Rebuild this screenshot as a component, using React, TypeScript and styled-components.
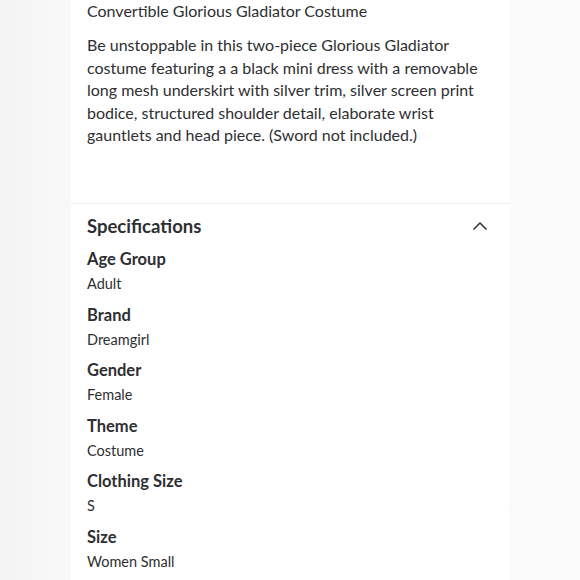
import React from 'react';
import styled, { createGlobalStyle } from 'styled-components';

const GlobalStyle = createGlobalStyle`
  html, body {
    margin: 0;
    padding: 0;
    background: linear-gradient(90deg, #f3f3f3 0%, #f8f8f8 10%, #fbfbfb 100%);
    font-family: Lato, "Open Sans", Arial, sans-serif;
    color: #2e2f32;
  }
`;

const Page = styled.div`
  width: 580px;
  height: 580px;
  overflow: hidden;
  display: flex;
`;

const Column = styled.div`
  margin-left: 71px;
  width: 438px;
  display: flex;
  flex-direction: column;
  flex-shrink: 0;

  & > * {
    flex-shrink: 0;
  }
`;

const Card = styled.section`
  background: #ffffff;
  padding: 0 16px;
`;

const DescriptionCard = styled(Card)`
  height: 203px;
  box-sizing: border-box;
`;

const Title = styled.div`
  font-size: 16px;
  line-height: 22px;
  margin: 0;
`;

const Description = styled.p`
  font-size: 16px;
  line-height: 22.5px;
  margin: 12px 0 0 0;
`;

const Divider = styled.div`
  height: 1px;
  background: #ececec;
`;

const SpecHeader = styled.div`
  display: flex;
  align-items: center;
  justify-content: space-between;
  height: 44px;
`;

const SpecTitle = styled.h2`
  font-size: 18.5px;
  font-weight: 700;
  margin: 0;
`;

const Chevron = styled.svg`
  width: 18px;
  height: 18px;
  margin-right: 4px;
`;

const SpecList = styled.dl`
  margin: 0;
  display: flex;
  flex-direction: column;
`;

const SpecItem = styled.div`
  height: 55.5px;
  display: flex;
  flex-direction: column;
  flex-shrink: 0;
`;

const SpecLabel = styled.dt`
  font-size: 16.5px;
  font-weight: 700;
  line-height: 22px;
`;

const SpecValue = styled.dd`
  font-size: 14.5px;
  line-height: 20px;
  margin: 4px 0 0 0;
`;

const specs = [
  { label: 'Age Group', value: 'Adult' },
  { label: 'Brand', value: 'Dreamgirl' },
  { label: 'Gender', value: 'Female' },
  { label: 'Theme', value: 'Costume' },
  { label: 'Clothing Size', value: 'S' },
  { label: 'Size', value: 'Women Small' },
];

export default function App() {
  return (
    <>
      <GlobalStyle />
      <Page>
        <Column>
          <DescriptionCard>
            <Title>Convertible Glorious Gladiator Costume</Title>
            <Description>
              Be unstoppable in this two-piece Glorious Gladiator costume featuring a a black mini
              dress with a removable long mesh underskirt with silver trim, silver screen print
              bodice, structured shoulder detail, elaborate wrist gauntlets and head piece. (Sword
              not included.)
            </Description>
          </DescriptionCard>
          <Divider />
          <Card>
            <SpecHeader>
              <SpecTitle>Specifications</SpecTitle>
              <Chevron viewBox="0 0 18 18">
                <path d="M2.5 12.5 L9 6 L15.5 12.5" fill="none" stroke="#2e2f32" strokeWidth="1.5" />
              </Chevron>
            </SpecHeader>
            <SpecList>
              {specs.map((s) => (
                <SpecItem key={s.label}>
                  <SpecLabel>{s.label}</SpecLabel>
                  <SpecValue>{s.value}</SpecValue>
                </SpecItem>
              ))}
            </SpecList>
          </Card>
        </Column>
      </Page>
    </>
  );
}
